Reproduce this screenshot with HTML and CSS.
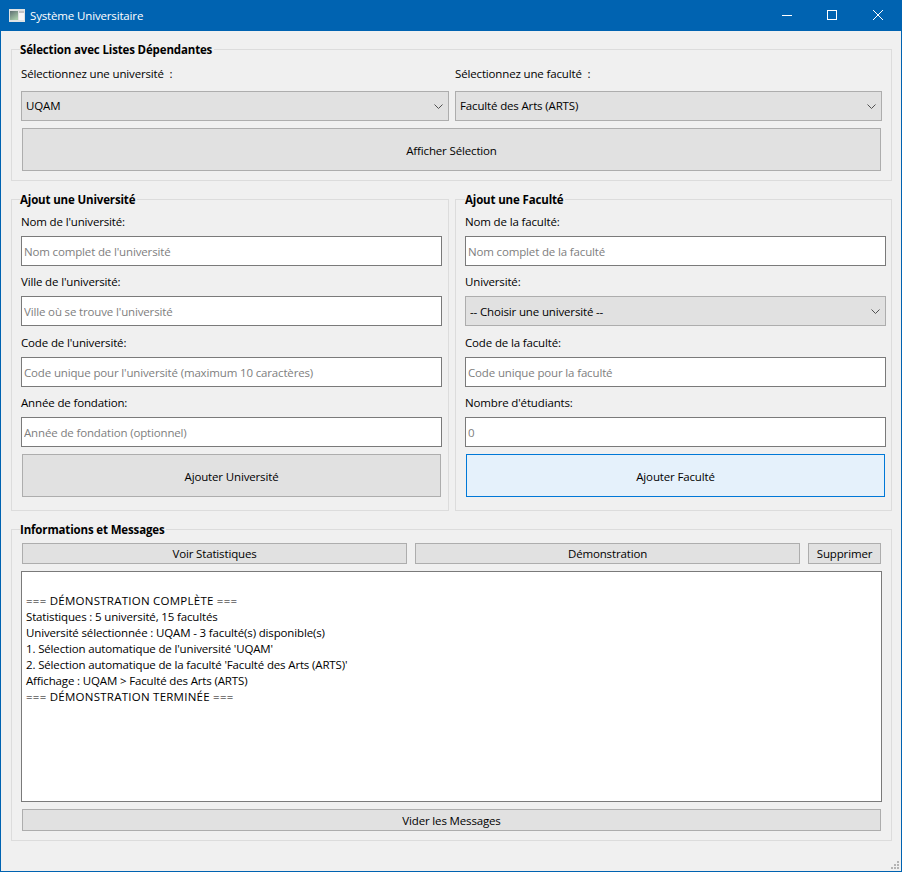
FILE: index.html
```html
<!DOCTYPE html>
<html lang="fr">
<head>
<meta charset="utf-8">
<title>Système Universitaire</title>
<link rel="stylesheet" href="styles.css">
</head>
<body>
<div class="window">
  <div class="titlebar">
    <svg class="appicon" width="16" height="13" viewBox="0 0 16 13">
      <defs>
        <linearGradient id="pane" x1="0" y1="0" x2="0.6" y2="1">
          <stop offset="0" stop-color="#5d6f72"/>
          <stop offset="1" stop-color="#a5c8a8"/>
        </linearGradient>
      </defs>
      <rect x="0" y="0" width="16" height="13" fill="#dfe3e4"/>
      <rect x="1" y="2" width="8" height="9" fill="url(#pane)"/>
      <rect x="10" y="2" width="5" height="9" fill="#f6f6f6"/>
      <rect x="10" y="2" width="5" height="2" fill="#c4c4c4"/>
    </svg>
    <span class="wintitle">Système Universitaire</span>
    <div class="wincontrols">
      <svg width="46" height="31" viewBox="0 0 46 31"><path d="M19 15.5h10" stroke="#fff" fill="none"/></svg>
      <svg width="46" height="31" viewBox="0 0 46 31"><rect x="18.5" y="10.5" width="9" height="9" stroke="#fff" fill="none"/></svg>
      <svg width="46" height="31" viewBox="0 0 46 31"><path d="M18 10l10 10M28 10l-10 10" stroke="#fff" fill="none"/></svg>
    </div>
  </div>

  <div class="client">
    <div class="group group-select">
      <div class="legend">Sélection avec Listes Dépendantes</div>
      <div class="select-row">
        <div class="select-col">
          <label class="label">Sélectionnez une université&nbsp; :</label>
          <select class="combo"><option>UQAM</option></select>
        </div>
        <div class="select-col">
          <label class="label">Sélectionnez une faculté&nbsp; :</label>
          <select class="combo"><option>Faculté des Arts (ARTS)</option></select>
        </div>
      </div>
      <button class="btn btn-show">Afficher Sélection</button>
    </div>

    <div class="forms">
      <div class="group group-form">
        <div class="legend">Ajout une Université</div>
        <label class="label">Nom de l'université:</label>
        <input class="field" placeholder="Nom complet de l'université">
        <label class="label">Ville de l'université:</label>
        <input class="field" placeholder="Ville où se trouve l'université">
        <label class="label label-low">Code de l'université:</label>
        <input class="field" placeholder="Code unique pour l'université (maximum 10 caractères)">
        <label class="label">Année de fondation:</label>
        <input class="field" placeholder="Année de fondation (optionnel)">
        <button class="btn btn-add">Ajouter Université</button>
      </div>
      <div class="group group-form group-right">
        <div class="legend">Ajout une Faculté</div>
        <label class="label">Nom de la faculté:</label>
        <input class="field" placeholder="Nom complet de la faculté">
        <label class="label">Université:</label>
        <select class="field combo"><option>-- Choisir une université --</option></select>
        <label class="label label-low">Code de la faculté:</label>
        <input class="field" placeholder="Code unique pour la faculté">
        <label class="label">Nombre d'étudiants:</label>
        <input class="field" placeholder="0">
        <button class="btn btn-add btn-hover">Ajouter Faculté</button>
      </div>
    </div>

    <div class="group group-info">
      <div class="legend">Informations et Messages</div>
      <div class="actions">
        <button class="btn btn-small btn-grow">Voir Statistiques</button>
        <button class="btn btn-small btn-grow">Démonstration</button>
        <button class="btn btn-small btn-del">Supprimer</button>
      </div>
      <div class="output">
        <p>&nbsp;</p>
        <p class="banner">=== DÉMONSTRATION COMPLÈTE ===</p>
        <p>Statistiques : 5 université, 15 facultés</p>
        <p>Université sélectionnée : UQAM - 3 faculté(s) disponible(s)</p>
        <p>1. Sélection automatique de l'université 'UQAM'</p>
        <p>2. Sélection automatique de la faculté 'Faculté des Arts (ARTS)'</p>
        <p>Affichage : UQAM &gt; Faculté des Arts (ARTS)</p>
        <p class="banner">=== DÉMONSTRATION TERMINÉE ===</p>
      </div>
      <button class="btn btn-small btn-clear">Vider les Messages</button>
    </div>

    <svg class="grip" width="8" height="8" viewBox="0 0 8 8" fill="#b4b4b4">
      <rect x="6" y="0" width="2" height="2"/>
      <rect x="3" y="3" width="2" height="2"/><rect x="6" y="3" width="2" height="2"/>
      <rect x="0" y="6" width="2" height="2"/><rect x="3" y="6" width="2" height="2"/><rect x="6" y="6" width="2" height="2"/>
    </svg>
  </div>
</div>
</body>
</html>
```

FILE: styles.css
```css
* { box-sizing: border-box; }
html, body { margin: 0; padding: 0; }
body { font-family: "Open Sans", "Noto Sans", sans-serif; font-size: 11.5px; letter-spacing: -0.15px; color: #000; }

.window { width: 902px; height: 872px; display: flex; flex-direction: column; background: #0063b1; padding: 0 1px 1px 1px; }

.titlebar { height: 31px; flex: none; display: flex; align-items: center; color: #fff; }
.appicon { margin-left: 8px; margin-right: 5px; }
.wincontrols { margin-left: auto; display: flex; }

.client { flex: 1; background: #f0f0f0; padding: 18px 9px 0 10px; position: relative; }

.group { border: 1px solid #dcdcdc; padding: 0 9px 0 9px; }
.legend { font-weight: 700; width: fit-content; height: 16px; line-height: 18px; margin: -9px 0 0 -1px; padding-right: 2px; background: #f0f0f0; }
.label { display: block; height: 16px; line-height: 14px; }

.group-select { height: 132px; }
.select-row { display: grid; grid-template-columns: 428px 427px; column-gap: 6px; margin-top: 10px; }
.select-col .label { margin-bottom: 8px; }

.field { display: block; width: 100%; height: 30px; border: 1px solid #7a7a7a; border-radius: 0; background: #fff; font: inherit; letter-spacing: inherit; padding: 0 2px; margin-bottom: 9px; outline: none; }
.field::placeholder { color: #7e7e7e; opacity: 1; }

.combo { appearance: none; display: block; width: 100%; height: 30px; border: 1px solid #adadad; border-radius: 0; background: #e1e1e1 url("data:image/svg+xml,%3Csvg xmlns='http://www.w3.org/2000/svg' width='9' height='5'%3E%3Cpath d='M.5.5l4 4 4-4' stroke='%23505050' fill='none'/%3E%3C/svg%3E") no-repeat right 5px center; font: inherit; letter-spacing: inherit; color: #000; padding: 0 20px 2px 4px; }
.group-form .combo { padding-bottom: 0; }

.btn { display: block; border: 1px solid #adadad; border-radius: 0; background: #e1e1e1; font: inherit; letter-spacing: inherit; color: #000; padding: 0; }
.btn-show { width: 859px; height: 43px; margin-top: 7px; margin-left: 1px; padding-top: 2px; }

.forms { display: grid; grid-template-columns: 438px 437px; column-gap: 6px; margin-top: 18px; }
.group-form { height: 312px; padding-right: 6px; }
.group-right { padding-right: 5px; }
.group-form .legend { margin-bottom: 8px; }
.group-right .legend { margin-left: 0; }
.group-form .label { margin-bottom: 5px; }
.group-form .label-low { margin-top: 10px; }
.btn-add { width: 419px; height: 43px; margin-left: 1px; margin-top: -2px; padding-top: 2px; }
.btn-hover { background: #e5f1fb; border-color: #0078d7; }

.group-info { height: 312px; margin-top: 18px; }
.actions { display: flex; gap: 8px; margin-top: 6px; margin-left: 1px; width: 859px; }
.btn-small { height: 21px; }
.btn-grow { flex: 1; }
.btn-del { width: 73px; flex: none; }
.output { width: 861px; height: 231px; margin-top: 7px; background: #fff; border: 1px solid #7a7a7a; padding: 5px 4px; line-height: 16px; }
.output p { margin: 0; }
.output .banner { letter-spacing: 0.25px; }
.btn-clear { width: 859px; height: 22px; margin-top: 7px; margin-left: 1px; }

.grip { position: absolute; right: 2px; bottom: 2px; }
```
